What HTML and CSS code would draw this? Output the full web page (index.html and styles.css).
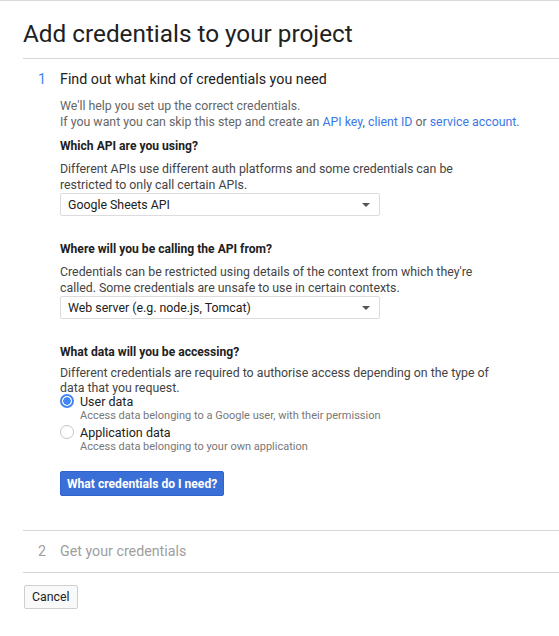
FILE: index.html
```html
<!DOCTYPE html>
<html lang="en">
<head>
<meta charset="utf-8">
<title>Add credentials to your project</title>
<link rel="stylesheet" href="styles.css">
</head>
<body>
<div class="page">
  <h1 class="title">Add credentials to your project</h1>

  <div class="step">
    <div class="step-head">
      <span class="step-num">1</span>
      <span class="step-title">Find out what kind of credentials you need</span>
    </div>
    <div class="step-body">
      <p class="intro">We'll help you set up the correct credentials.<br>If you want you can skip this step and create an <a href="#">API key</a>, <a href="#">client ID</a> or <a href="#">service account</a>.</p>

      <div class="field first">
        <div class="label">Which API are you using?</div>
        <p class="desc">Different APIs use different auth platforms and some credentials can be restricted to only call certain APIs.</p>
        <div class="select"><span>Google Sheets API</span><span class="arrow"></span></div>
      </div>

      <div class="field">
        <div class="label">Where will you be calling the API from?</div>
        <p class="desc">Credentials can be restricted using details of the context from which they're called. Some credentials are unsafe to use in certain contexts.</p>
        <div class="select"><span>Web server (e.g. node.js, Tomcat)</span><span class="arrow"></span></div>
      </div>

      <div class="field">
        <div class="label">What data will you be accessing?</div>
        <p class="desc desc-tight">Different credentials are required to authorise access depending on the type of data that you request.</p>
        <div class="radios">
          <div class="radio-row">
            <span class="radio checked"></span>
            <div class="radio-text">
              <div class="radio-label">User data</div>
              <div class="radio-sub">Access data belonging to a Google user, with their permission</div>
            </div>
          </div>
          <div class="radio-row">
            <span class="radio"></span>
            <div class="radio-text">
              <div class="radio-label">Application data</div>
              <div class="radio-sub">Access data belonging to your own application</div>
            </div>
          </div>
        </div>
      </div>

      <button class="primary">What credentials do I need?</button>
    </div>
  </div>

  <div class="step step-disabled">
    <div class="step-head">
      <span class="step-num">2</span>
      <span class="step-title">Get your credentials</span>
    </div>
  </div>

  <div class="actions">
    <button class="secondary">Cancel</button>
  </div>
</div>
</body>
</html>
```

FILE: styles.css
```css
html, body {
  margin: 0;
  padding: 0;
  background: #fff;
}

body {
  font-family: Roboto, "Liberation Sans", Arial, sans-serif;
  color: #212121;
  border-top: 1px solid #d9d9d9;
}

.page {
  padding-left: 23px;
}

.title {
  margin: 0;
  padding: 17px 0 8px 0;
  font-size: 24.3px;
  line-height: 32px;
  font-weight: 400;
  color: #212121;
  border-bottom: 1px solid #d6d6d6;
}

.step {
  border-bottom: 1px solid #d6d6d6;
}

.step-head {
  display: flex;
  align-items: baseline;
  padding: 10px 0 0 15px;
  font-size: 14.25px;
  line-height: 20px;
}

.step-num {
  width: 22px;
  color: #4285f4;
}

.step-title {
  color: #212121;
}

.step-body {
  padding: 9px 0 34px 37px;
}

.intro {
  margin: 0;
  font-size: 12.35px;
  line-height: 16px;
  color: #666;
}

.intro a {
  color: #3b78e7;
  text-decoration: none;
}

.field {
  margin-top: 25px;
}

.field.first {
  margin-top: 8px;
}

.label {
  font-size: 12.1px;
  line-height: 16px;
  font-weight: 700;
  color: #212121;
}

.desc {
  margin: 7px 0 0 0;
  max-width: 440px;
  font-size: 12.35px;
  line-height: 16px;
  color: #444;
}

.desc-tight {
  margin-top: 6px;
  line-height: 15px;
}

.select {
  display: flex;
  align-items: center;
  justify-content: space-between;
  box-sizing: border-box;
  width: 320px;
  height: 23px;
  margin-top: 0;
  padding: 0 8px 0 7px;
  border: 1px solid #dcdcdc;
  border-radius: 2px;
  background: #fff;
  font-size: 12.35px;
  color: #212121;
}

.arrow {
  width: 0;
  height: 0;
  border-left: 4px solid transparent;
  border-right: 4px solid transparent;
  border-top: 4px solid #555;
  margin-right: 1px;
}

.radios {
  margin-top: 0;
}

.radio-row {
  display: flex;
  align-items: flex-start;
  margin-bottom: 4px;
}

.radio {
  box-sizing: border-box;
  width: 14px;
  height: 14px;
  margin-top: -2px;
  margin-right: 6px;
  border: 1px solid #c6c6c6;
  border-radius: 50%;
  background: #fff;
  flex: none;
}

.radio.checked {
  border: 2px solid #4285f4;
  background: radial-gradient(circle, #4285f4 0 3.5px, #fff 4px);
}

.radio-label {
  font-size: 12.5px;
  line-height: 12px;
  color: #212121;
}

.radio-sub {
  font-size: 11px;
  line-height: 15px;
  color: #777;
}

.primary {
  display: block;
  margin-top: 17px;
  box-sizing: border-box;
  height: 25px;
  padding: 0 6px;
  border: 1px solid #2f63cf;
  border-radius: 2px;
  background: #3a6fd8;
  color: #fff;
  font-family: Roboto, "Liberation Sans", Arial, sans-serif;
  font-size: 12.1px;
  font-weight: 700;
}

.step-disabled .step-head {
  padding: 10px 0 11px 15px;
}

.step-disabled .step-num,
.step-disabled .step-title {
  color: #9e9e9e;
}

.actions {
  padding-top: 12px;
}

.secondary {
  box-sizing: border-box;
  height: 24px;
  margin-left: 1px;
  padding: 0 7px;
  border: 1px solid #cfcfcf;
  border-radius: 2px;
  background: #f9f9f9;
  color: #212121;
  font-family: Roboto, "Liberation Sans", Arial, sans-serif;
  font-size: 12.35px;
}
```
